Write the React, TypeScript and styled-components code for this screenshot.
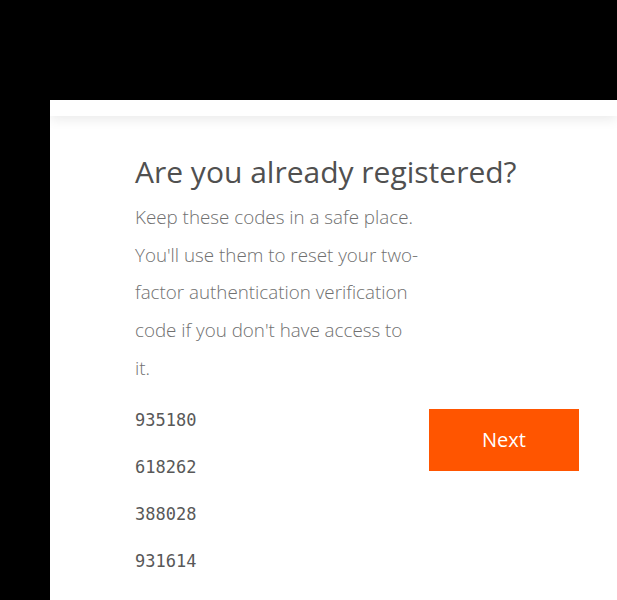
import React from "react";
import styled, { createGlobalStyle } from "styled-components";

const Global = createGlobalStyle`
  html, body { margin: 0; padding: 0; background: #000; }
  body { font-family: "Open Sans", sans-serif; }
`;

const Page = styled.div`
  padding: 100px 0 0 50px;
  min-height: 600px;
  box-sizing: border-box;
  display: flex;
  flex-direction: column;
`;

const Panel = styled.div`
  background: #fff;
  flex: 1;
  min-height: 500px;
  display: flex;
  flex-direction: column;
`;

const TopBar = styled.div`
  height: 16px;
  background: #fff;
  box-shadow: 0 4px 12px rgba(0, 0, 0, 0.08);
  position: relative;
  z-index: 1;
`;

const Content = styled.div`
  padding: 36px 38px 0 85px;
  display: flex;
  flex-direction: column;
`;

const Title = styled.h1`
  margin: 0;
  font-family: "Open Sans", sans-serif;
  font-weight: 400;
  font-size: 30px;
  line-height: 40px;
  color: #505050;
`;

const Text = styled.p`
  margin: 7px 0 0;
  width: 287px;
  font-family: "Open Sans", sans-serif;
  font-weight: 300;
  font-size: 18.8px;
  line-height: 37.7px;
  color: #707070;
`;

const Row = styled.div`
  display: flex;
  justify-content: space-between;
  align-items: flex-start;
  margin-top: 22px;
`;

const Codes = styled.ul`
  list-style: none;
  margin: 0;
  padding: 0;
  display: flex;
  flex-direction: column;
  gap: 27px;
`;

const Code = styled.li`
  font-family: "DejaVu Sans Mono", monospace;
  font-size: 17px;
  line-height: 20px;
  color: #585858;
`;

const NextButton = styled.button`
  width: 150px;
  height: 62px;
  border: none;
  background: #ff5500;
  color: #fff;
  font-family: "Open Sans", sans-serif;
  font-size: 20px;
  font-weight: 400;
  cursor: pointer;
  padding: 0;
  margin-top: -1px;
`;

const codes = ["935180", "618262", "388028", "931614"];

export default function App() {
  return (
    <>
      <Global />
      <Page>
        <Panel>
          <TopBar />
          <Content>
            <Title>Are you already registered?</Title>
            <Text>
              Keep these codes in a safe place. You'll use them to reset your two-factor
              authentication verification code if you don't have access to it.
            </Text>
            <Row>
              <Codes>
                {codes.map((c) => (
                  <Code key={c}>{c}</Code>
                ))}
              </Codes>
              <NextButton>Next</NextButton>
            </Row>
          </Content>
        </Panel>
      </Page>
    </>
  );
}
